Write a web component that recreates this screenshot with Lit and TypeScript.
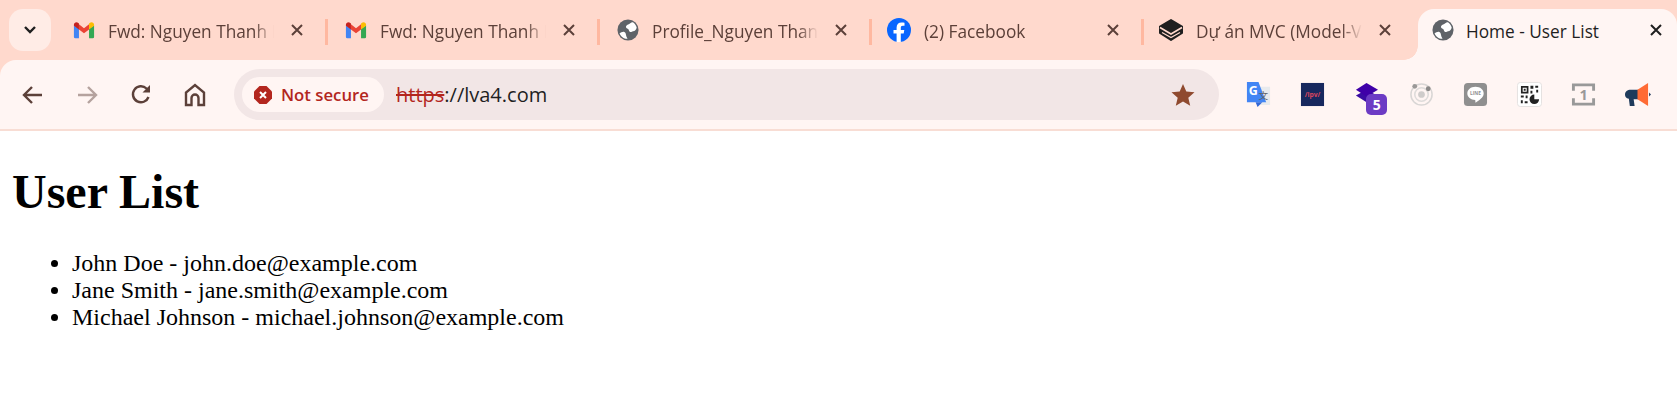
import { LitElement, css, html } from "lit";
import { customElement } from "lit/decorators.js";

const gmail = html`<svg class="fav" viewBox="0 0 24 24">
  <path fill="#4285f4" d="M1 7v12.500A1.500 1.500 0 0 0 2.500 21H6.500V10.500z" />
  <path fill="#34a853" d="M23 7v12.500a1.500 1.500 0 0 1-1.500 1.500h-4V10.500z" />
  <path fill="#ea4335" d="M6.500 5.800 12 10l5.500-4.200v5.700L12 15.600l-5.500-4.100z" />
  <path fill="#c5221f" d="M1 6.300C1 3.700 4 2.600 5.800 4.300l.7.500v6.700L1 7.400z" />
  <path fill="#fbbc04" d="M23 6.300c0-2.600-3-3.700-4.800-2l-.7.500v6.700L23 7.400z" />
</svg>`;

const globe = html`<svg class="fav" viewBox="0 0 24 24">
  <circle cx="12" cy="12" r="11.500" fill="#5f6368" />
  <path fill="#fff" d="M2.800 15.500c1.500-.5 3-1.800 4.700-1.500 1.500.4 2 1.500 2.200 3 .1 1.500.8 3 1.800 4.600-3.800.2-7.400-2.300-8.700-6.100z" />
  <path fill="#fff" d="M10 7.500c1.200-1.300 3-1.700 4.500-2.800 1.300-1 2.300-1.700 3.300-.8 1.800 1.300 3 3.300 3.700 5.600-1 2.200-1.700 3.700-4 3.800-1.300.1-1.800 1.300-3.200.8-1.800-.8-.8-2.600-2.200-3.300-1.300-.6-3-1.600-2.100-3.300z" />
</svg>`;

const facebook = html`<svg class="fav wide" viewBox="0 0 24 24">
  <circle cx="12" cy="12" r="12" fill="#0866ff" />
  <path fill="#fff" d="M16.700 15.500 17.300 12h-3.500V9.800c0-1.100.5-2 2-2h1.700V4.700c-.9-.1-1.900-.3-2.900-.3-3.100 0-5 1.900-5 5V12H6.500v3.500h3.100V24h4.200v-8.500z" />
</svg>`;

const layers = html`<svg class="fav wide" viewBox="0 0 24 24">
  <path fill="#1f1f1f" stroke="#1f1f1f" stroke-width="2" stroke-linejoin="round" d="M12 2 23 8.500V15L12 22 1 15V8.500z" />
  <path fill="none" stroke="#ffd9cd" stroke-width="1.600" d="M1 9.500 12 16l11-6.500" />
  <path fill="none" stroke="#ffd9cd" stroke-width="1.200" d="M3 14.500 12 19.500l9-5" />
</svg>`;

const closeIcon = html`<svg class="x" viewBox="0 0 12 12">
  <path d="M1 1l10 10M11 1 1 11" fill="none" stroke="currentColor" stroke-width="2" />
</svg>`;

const tabs = [
  { title: "Fwd: Nguyen Thanh L", icon: gmail },
  { title: "Fwd: Nguyen Thanh L", icon: gmail },
  { title: "Profile_Nguyen Than", icon: globe },
  { title: "(2) Facebook", icon: facebook },
  { title: "Dự án MVC (Model-V", icon: layers },
];

const extensions = [
  html`<svg viewBox="0 0 26 26">
    <path fill="#e8eaed" d="M12 5h13v19H14z" />
    <path fill="#4285f4" d="M1 0h12l8 21H1z" />
    <path fill="#3367d6" d="M10 21h7l-5 5z" />
    <text x="7.500" y="14" class="g">G</text>
    <text x="18" y="18" class="zi">文</text>
  </svg>`,
  html`<svg viewBox="0 0 26 26">
    <rect x="1" y="1" width="24" height="24" fill="#17285e" />
    <text x="13" y="15.500" class="ipv">/ipv/</text>
  </svg>`,
  html`<svg viewBox="0 0 26 26">
    <path fill="#3a0ca3" d="M13 8 24 14 13 21 2 14z" />
    <path fill="#3f00a8" d="M13 1 25 8 13 15 2 8z" />
  </svg>`,
  html`<svg viewBox="0 0 26 26">
    <circle cx="13" cy="13" r="11" fill="none" stroke="#d9d6d5" stroke-width="1.600" />
    <circle cx="13" cy="13" r="7" fill="none" stroke="#dedbda" stroke-width="1.600" />
    <circle cx="13" cy="13" r="3.500" fill="#cfcccb" />
    <circle cx="6" cy="4.500" r="2.500" fill="#9a9897" />
    <circle cx="20" cy="7" r="2.500" fill="#8b8988" />
  </svg>`,
  html`<svg viewBox="0 0 26 26">
    <rect x="1" y="1" width="24" height="24" rx="4" fill="#8f8f8f" />
    <path fill="#fff" d="M13 5c5 0 8.500 3 8.500 7 0 4-4.500 7-8.500 9.500l-.3-2.700C8 18.500 4.500 15.800 4.500 12c0-4 3.500-7 8.500-7z" />
    <text x="13" y="14" class="line">LINE</text>
  </svg>`,
  html`<svg viewBox="0 0 26 26">
    <rect x=".5" y=".5" width="25" height="25" rx="3" fill="#fff" stroke="#e4e1e0" />
    <path fill="none" stroke="#222" stroke-width="1.800" d="M5 5h6v6H5z" />
    <path fill="#222" d="M7 7h2v2H7zM14 4h3v3h-3zM14 9h2v3h-2zM19 4h3v2h-3zM20 8h2v3h-2zM4 14h3v2H4zM9 14h2v3H9zM4 19h2v3H4zM8 20h3v2H8z" />
    <path fill="#222" d="M18 13a5 5 0 1 0 5 5h-5z" />
  </svg>`,
  html`<svg viewBox="0 0 26 26">
    <path fill="none" stroke="#999" stroke-width="3" d="M2.500 9V3h21v6M2.500 17v6h21v-6" />
    <text x="13" y="19" class="one">1</text>
  </svg>`,
  html`<svg viewBox="0 0 26 26">
    <path fill="#1f3b5c" d="M6 8h9v10H9l1 7H5l-1-7.500C1 17 0 15 0 13c0-3 2.500-5 6-5z" />
    <path fill="#ff6b35" d="M13 8 24 1v24L13 18z" />
    <path fill="#1f3b5c" d="M25 11l2 2-2 2z" />
  </svg>`,
];

@customElement("app-root")
export class AppRoot extends LitElement {
  static override styles = css`
    :host {
      display: block;
      overflow: hidden;
      background: #fff;
      min-height: 407px;
    }

    .chrome {
      background: #ffd9cd;
    }

    .strip {
      display: flex;
      align-items: flex-start;
      height: 60px;
      font-family: "Open Sans", sans-serif;
      font-size: 17.250px;
      color: #5c4039;
    }

    .tab-search {
      flex: none;
      display: flex;
      align-items: center;
      justify-content: center;
      width: 42px;
      height: 42px;
      margin: 9px 5px 0 9px;
      border-radius: 14px;
      background: #ffece6;
      color: #1f1f1f;
    }

    .tab-search svg {
      width: 14px;
      height: 10px;
    }

    .tab {
      flex: none;
      box-sizing: border-box;
      display: flex;
      align-items: center;
      width: 269px;
      height: 42px;
      margin-top: 9px;
      padding: 0 22px 0 17px;
    }

    .fav {
      flex: none;
      width: 22px;
      height: 22px;
      margin-right: 13px;
    }

    .fav.wide {
      width: 24px;
      height: 24px;
      margin-left: -2px;
    }

    .title {
      flex: 1;
      min-width: 0;
      margin-right: 17px;
      padding-top: 2px;
      white-space: nowrap;
      overflow: hidden;
      -webkit-mask-image: linear-gradient(to right, #000 88%, transparent 100%);
      mask-image: linear-gradient(to right, #000 88%, transparent 100%);
    }

    .x {
      flex: none;
      width: 12px;
      height: 12px;
    }

    .sep {
      flex: none;
      width: 3px;
      height: 26px;
      margin-top: 19px;
      background: #ffb8a0;
    }

    .tab.active {
      position: relative;
      width: 259px;
      height: 51px;
      margin: 9px 0 0 5px;
      padding: 0 15px 9px 14px;
      border-radius: 16px 16px 0 0;
      background: #fff5f3;
      color: #1f1f1f;
    }

    .tab.active .fav {
      margin-right: 12px;
    }

    .tab.active .title {
      -webkit-mask-image: none;
      mask-image: none;
    }

    .tab.active::before {
      content: "";
      position: absolute;
      left: -14px;
      bottom: 0;
      width: 14px;
      height: 14px;
      background: radial-gradient(circle at 0 0, transparent 13.500px, #fff5f3 14px);
    }

    .toolbar {
      box-sizing: border-box;
      display: flex;
      align-items: center;
      height: 71px;
      padding-left: 16px;
      border-bottom: 2px solid #f8ddd4;
      border-radius: 16px 0 0 0;
      background: #fff5f3;
      color: #5c4039;
    }

    .nav {
      flex: none;
      width: 34px;
      height: 34px;
      margin-right: 20px;
    }

    .nav.off {
      opacity: 0.45;
    }

    .omnibox {
      flex: none;
      box-sizing: border-box;
      display: flex;
      align-items: center;
      width: 985px;
      height: 51px;
      margin-left: 2px;
      padding: 0 24px 0 8px;
      border-radius: 26px;
      background: #f2e6e6;
      font-family: "Open Sans", sans-serif;
    }

    .chip {
      flex: none;
      box-sizing: border-box;
      display: flex;
      align-items: center;
      gap: 9px;
      width: 142px;
      height: 35px;
      padding-left: 12px;
      border-radius: 18px;
      background: #fff5f3;
      color: #b3261e;
      font-size: 16.750px;
      font-weight: 600;
    }

    .chip svg {
      width: 18px;
      height: 18px;
    }

    .url {
      flex: 1;
      margin-left: 12px;
      font-size: 20px;
      color: #1f1f1f;
    }

    .url s {
      color: #b3261e;
    }

    .star {
      flex: none;
      width: 24px;
      height: 24px;
    }

    .extensions {
      flex: none;
      display: flex;
      margin-left: 27px;
      gap: 29.200px;
    }

    .ext {
      position: relative;
      width: 25px;
      height: 25px;
    }

    .ext svg {
      display: block;
      width: 25px;
      height: 25px;
      overflow: visible;
    }

    .ext text {
      font-family: "Open Sans", sans-serif;
      text-anchor: middle;
    }

    .ext .g {
      font-size: 13px;
      font-weight: 700;
      fill: #fff;
    }

    .ext .zi {
      font-family: "Noto Sans CJK SC", sans-serif;
      font-size: 10px;
      fill: #5f6368;
    }

    .ext .ipv {
      font-size: 7px;
      font-weight: 700;
      fill: #d9455f;
    }

    .ext .line {
      font-size: 5px;
      font-weight: 700;
      fill: #8f8f8f;
    }

    .ext .one {
      font-size: 15px;
      font-weight: 700;
      fill: #999;
    }

    .badge {
      position: absolute;
      right: -8px;
      bottom: -8px;
      display: flex;
      align-items: center;
      justify-content: center;
      width: 21px;
      height: 21px;
      border-radius: 5px;
      background: #6c3bc4;
      color: #fff;
      font: 700 14px "Open Sans", sans-serif;
    }

    .page {
      padding: 0 12px;
      font-family: "Liberation Serif", serif;
      color: #000;
      font-size: 24px;
    }

    .heading {
      margin: 0;
      padding: 33px 0 31px;
      font-size: 48px;
      font-weight: 700;
    }

    .users {
      margin: 0;
      padding: 0 0 0 60px;
    }
  `;

  override render() {
    return html`
      <div class="chrome">
        <div class="strip">
          <div class="tab-search">
            <svg viewBox="0 0 14 10">
              <path d="M2 2l5 5 5-5" fill="none" stroke="currentColor" stroke-width="2.400" />
            </svg>
          </div>
          ${tabs.map(
            (t, i) => html`
              <div class="tab">
                ${t.icon}
                <span class="title">${t.title}</span>
                ${closeIcon}
              </div>
              ${i < tabs.length - 1 ? html`<div class="sep"></div>` : ""}
            `,
          )}
          <div class="tab active">
            ${globe}
            <span class="title">Home - User List</span>
            ${closeIcon}
          </div>
        </div>
        <div class="toolbar">
          <svg class="nav" viewBox="0 0 34 34">
            <path d="M26 17H8M16 9l-8 8 8 8" fill="none" stroke="currentColor" stroke-width="2.400" />
          </svg>
          <svg class="nav off" viewBox="0 0 34 34">
            <path d="M8 17h18M18 9l8 8-8 8" fill="none" stroke="currentColor" stroke-width="2.400" />
          </svg>
          <svg class="nav" viewBox="0 0 34 34">
            <path d="M24.500 19a8 8 0 1 1-2-8.500L25 13" fill="none" stroke="currentColor" stroke-width="2.400" />
            <path d="M26 7v7.500h-7.500z" fill="currentColor" />
          </svg>
          <svg class="nav" viewBox="0 0 34 34">
            <path
              d="M8 27V14.500L17 7l9 7.500V27h-5.500v-7a3.500 3.500 0 0 0-7 0v7z"
              fill="none"
              stroke="currentColor"
              stroke-width="2.400"
            />
          </svg>
          <div class="omnibox">
            <div class="chip">
              <svg viewBox="0 0 18 18">
                <path fill="#b3261e" d="M5.500 0h7L18 5.500v7L12.500 18h-7L0 12.500v-7z" />
                <path d="M6 6l6 6M12 6l-6 6" fill="none" stroke="#fff" stroke-width="2" />
              </svg>
              Not secure
            </div>
            <div class="url"><s>https</s>://lva4.com</div>
            <svg class="star" viewBox="0 0 24 24">
              <path fill="#8f4a2f" d="M12 1l3.300 7.500 8.200.8-6.200 5.400 1.900 8L12 18.500l-7.200 4.200 1.900-8L.5 9.300l8.200-.8z" />
            </svg>
          </div>
          <div class="extensions">
            ${extensions.map(
              (icon, i) => html`
                <div class="ext">
                  ${icon} ${i === 2 ? html`<span class="badge">5</span>` : ""}
                </div>
              `,
            )}
          </div>
        </div>
      </div>
      <div class="page">
        <h1 class="heading">User List</h1>
        <ul class="users">
          <li>John Doe - john.doe@example.com</li>
          <li>Jane Smith - jane.smith@example.com</li>
          <li>Michael Johnson - michael.johnson@example.com</li>
        </ul>
      </div>
    `;
  }
}
